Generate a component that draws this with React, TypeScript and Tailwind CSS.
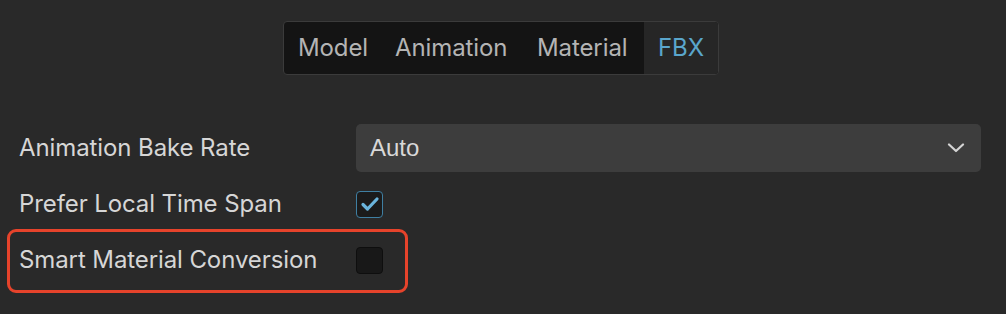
import React from "react";

const ui = { fontFamily: "Inter, 'Noto Sans', sans-serif" };

export default function App() {
  const tabs = [
    { name: "Model", w: "w-[97px]" },
    { name: "Animation", w: "w-[142px]" },
    { name: "Material", w: "w-[121px]" },
    { name: "FBX", w: "w-[74px]", active: true },
  ];
  return (
    <div className="w-[1006px] h-[314px] bg-[#292929] overflow-hidden" style={ui}>
      <div className="flex justify-center pt-[21px] pr-[4px]">
        <div className="flex h-[54px] rounded-[4px] border border-[#3b3b3b] bg-[#141414] overflow-hidden">
          {tabs.map((t) => (
            <div
              key={t.name}
              className={`${t.w} flex items-center pl-[14px] text-[24px] tracking-[-0.1px] ${
                t.active ? "bg-[#262626] text-[#5aa6cc]" : "text-[#b4b4b4]"
              }`}
            >
              {t.name}
            </div>
          ))}
        </div>
      </div>

      <div className="mt-[45px] flex flex-col">
        <div className="flex items-center h-[56px]">
          <div className="w-[356px] pl-[19px] text-[24px] tracking-[-0.1px] text-[#d6d6d6]">Animation Bake Rate</div>
          <div className="w-[625px] h-[48px] rounded-[5px] bg-[#3d3d3d] flex items-center justify-between pl-[14px] pr-[16px]">
            <span className="text-[24px] text-[#d8d8d8]" style={{ fontFamily: "'Liberation Sans', Arial, sans-serif" }}>
              Auto
            </span>
            <svg width="18" height="10" viewBox="0 0 18 10" fill="none">
              <path d="M2 1.5 L9 8 L16 1.5" stroke="#d4d4d4" strokeWidth="2.2" strokeLinecap="round" strokeLinejoin="round" />
            </svg>
          </div>
        </div>

        <div className="flex items-center h-[56px]">
          <div className="w-[356px] pl-[19px] text-[24px] tracking-[-0.1px] text-[#d6d6d6]">Prefer Local Time Span</div>
          <div className="w-[27px] h-[27px] rounded-[4px] border-[1.5px] border-[#3f7fa2] bg-[#1b1b1b] flex items-center justify-center">
            <svg width="20" height="16" viewBox="0 0 20 16" fill="none">
              <path d="M3 8.5 L7.5 13 L17 3" stroke="#6ab4dc" strokeWidth="3.2" strokeLinecap="round" strokeLinejoin="round" />
            </svg>
          </div>
        </div>

        <div className="relative flex items-center h-[56px]">
          <div className="w-[356px] pl-[19px] text-[24px] tracking-[-0.1px] text-[#d6d6d6]">Smart Material Conversion</div>
          <div className="w-[27px] h-[27px] rounded-[4px] border border-[#0e0e0e] bg-[#181818]" />
          <div className="absolute left-[7px] top-[-3px] w-[401px] h-[64px] rounded-[9px] border-[3px] border-[#e6432b]" />
        </div>
      </div>
    </div>
  );
}
